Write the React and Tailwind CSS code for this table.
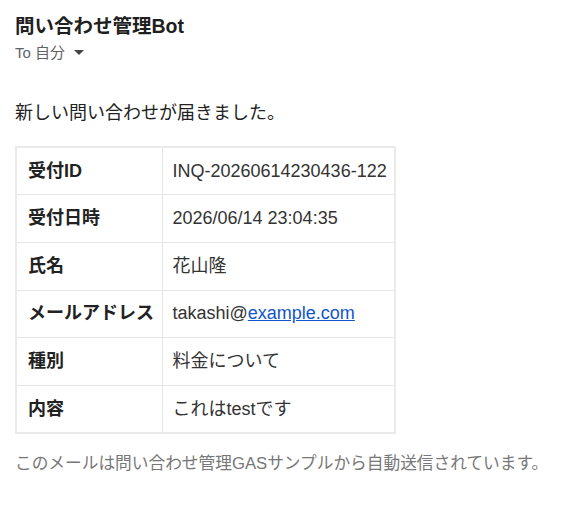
import React from "react";

const rows = [
  ["受付ID", "INQ-20260614230436-122"],
  ["受付日時", "2026/06/14 23:04:35"],
  ["氏名", "花山隆"],
  ["メールアドレス", null],
  ["種別", "料金について"],
  ["内容", "これはtestです"],
];

export default function App() {
  return (
    <div
      className="w-[562px] h-[505px] bg-white overflow-hidden px-[15px] pt-[14px]"
      style={{ fontFamily: '"Liberation Sans", Arial, "Noto Sans CJK JP", sans-serif' }}
    >
      <div className="text-[19.5px] leading-[24px] font-bold text-[#1f1f1f]">問い合わせ管理Bot</div>
      <div className="mt-[5px] flex items-center gap-[6px] text-[15px] leading-[20px] text-[#5f6368]">
        <span>To 自分</span>
        <svg width="10" height="6" viewBox="0 0 10 6" className="ml-[3px]">
          <path d="M0 0 L10 0 L5 5 Z" fill="#444" />
        </svg>
      </div>
      <div className="mt-[38px] text-[18px] leading-[24px] text-[#222]">新しい問い合わせが届きました。</div>
      <table className="mt-[21px] border-collapse border-2 border-[#eaeaea] w-[381px] text-[18px] text-[#222]">
        <tbody>
          {rows.map(([k, v]) => (
            <tr key={k} className="h-[47.7px]">
              <td className="w-[146px] border border-[#e6e6e6] pl-[11px] pr-[4px] font-bold whitespace-nowrap">{k}</td>
              <td className="border border-[#e6e6e6] pl-[10px] pr-[6px] whitespace-nowrap text-[#333]">
                {v === null ? (
                  <span>
                    takashi@<span className="text-[#1155cc] underline">example.com</span>
                  </span>
                ) : (
                  v
                )}
              </td>
            </tr>
          ))}
        </tbody>
      </table>
      <div className="mt-[19px] text-[16.7px] leading-[22px] text-[#777] whitespace-nowrap">
        このメールは問い合わせ管理GASサンプルから自動送信されています。
      </div>
    </div>
  );
}
